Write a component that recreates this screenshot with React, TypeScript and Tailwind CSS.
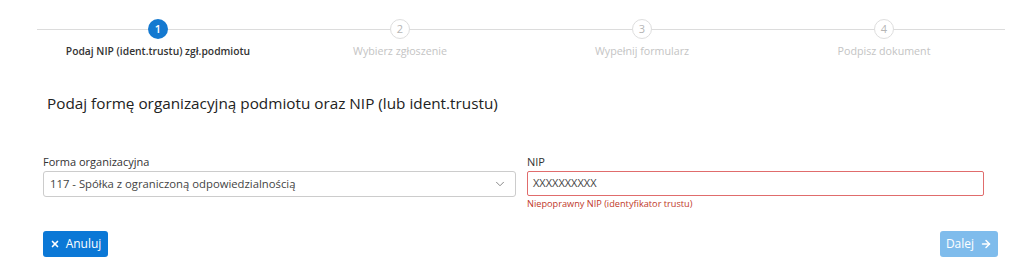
import { ChevronDown, ArrowRight, X } from "lucide-react"

const steps = [
  { n: 1, label: "Podaj NIP (ident.trustu) zgł.podmiotu" },
  { n: 2, label: "Wybierz zgłoszenie" },
  { n: 3, label: "Wypełnij formularz" },
  { n: 4, label: "Podpisz dokument" },
]

const Stepper = () => (
  <div className="relative ml-[37px] w-[968px]">
    <div className="absolute left-0 right-0 top-[10px] h-px bg-[#dcdcdc]" />
    <div className="relative grid grid-cols-4">
      {steps.map((s) => {
        const active = s.n === 1
        return (
          <div key={s.n} className="flex flex-col items-center">
            <div
              className={
                active
                  ? "flex h-[20px] w-[20px] items-center justify-center rounded-full bg-[#1479d0] text-[11px] font-semibold text-white"
                  : "flex h-[20px] w-[20px] items-center justify-center rounded-full border border-[#dedede] bg-white text-[11px] text-[#b5b5b5]"
              }
            >
              {s.n}
            </div>
            <div
              className={
                active
                  ? "mt-[5px] text-[10.3px] font-semibold leading-[15px] text-[#333]"
                  : "mt-[5px] text-[10.7px] leading-[15px] text-[#c4c4c4]"
              }
            >
              {s.label}
            </div>
          </div>
        )
      })}
    </div>
  </div>
)

export default function App() {
  return (
    <div className="h-[271px] w-[1024px] overflow-hidden bg-white pt-[19px] font-['Open_Sans',sans-serif] text-[#333]">
      <Stepper />
      <h1 className="ml-[47px] mt-[33px] text-[15.3px] leading-[22px] text-[#222]">
        Podaj formę organizacyjną podmiotu oraz NIP (lub ident.trustu)
      </h1>
      <div className="ml-[43px] mt-[40px] flex gap-[11px]">
        <div className="w-[473px]">
          <label className="block text-[11px] leading-[16px] text-[#333]">Forma organizacyjna</label>
          <div className="mt-[1px] flex h-[26px] items-center justify-between rounded-[3px] border border-[#ccc] bg-white pl-[6px] pr-[8px] text-[11.3px] text-[#444]">
            <span>117 - Spółka z ograniczoną odpowiedzialnością</span>
            <ChevronDown size={14} strokeWidth={1.5} className="text-[#777]" />
          </div>
        </div>
        <div className="w-[457px]">
          <label className="block text-[11px] leading-[16px] text-[#333]">NIP</label>
          <div className="mt-[1px] flex h-[25px] items-center rounded-[2px] border border-[#e06c6c] bg-white pl-[5px] text-[11px] text-[#444]">
            XXXXXXXXXX
          </div>
          <div className="mt-[1px] text-[9.2px] leading-[14px] text-[#c0392b]">
            Niepoprawny NIP (identyfikator trustu)
          </div>
        </div>
      </div>
      <div className="ml-[43px] mr-[26px] mt-[20px] flex justify-between">
        <button className="flex h-[26px] w-[65px] items-center justify-center gap-[6px] rounded-[3px] bg-[#0b78d6] text-[12px] font-medium text-white">
          <X size={10} strokeWidth={4} />
          Anuluj
        </button>
        <button className="flex h-[26px] w-[58px] items-center justify-center gap-[6px] rounded-[3px] bg-[#7fbcec] text-[12px] font-medium text-white">
          Dalej
          <ArrowRight size={12} strokeWidth={3} />
        </button>
      </div>
    </div>
  )
}
